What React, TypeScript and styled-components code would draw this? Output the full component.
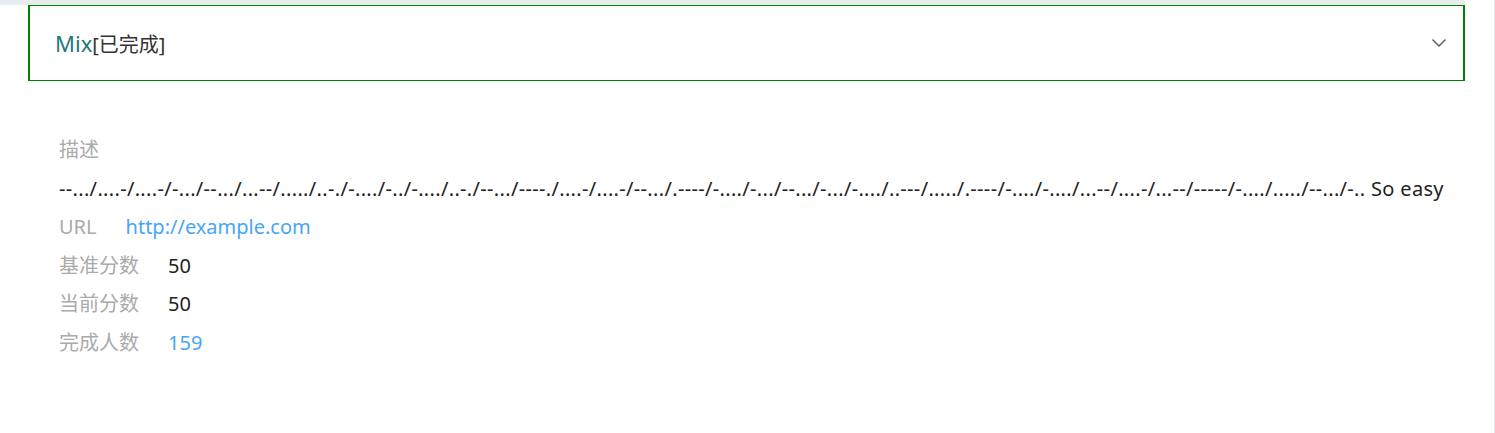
import { createGlobalStyle, styled } from 'styled-components';

const GlobalStyle = createGlobalStyle`
  html, body {
    margin: 0;
    padding: 0;
    background: #fff;
  }
  body {
    font-family: "Noto Sans", "Noto Sans CJK SC", sans-serif;
  }
`;

const Root = styled.div`
  width: 1495px;
  height: 433px;
  box-sizing: border-box;
  border-right: 1px solid #ebebf4;
`;

const Column = styled.div`
  width: 1465px;
  border-top: 5px solid #e9ecef;
  padding-left: 28px;
  box-sizing: border-box;
`;

const Panel = styled.div`
  height: 76px;
  box-sizing: border-box;
  border: 1px solid #008000;
  border-left-width: 2px;
  border-right-width: 2px;

  display: flex;
  align-items: center;
  padding: 0 16px 0 25px;
`;

const Title = styled.span`
  font-size: 22px;
  color: #237a78;
  line-height: 1;
`;

const Status = styled.span`
  font-size: 20px;
  color: #333;
`;

const Chevron = styled.svg`
  margin-left: auto;
  width: 16px;
  height: 10px;
  color: #555;
`;

const Body = styled.div`
  padding: 50px 0 0 31px;
  font-size: 20px;
  line-height: 38.6px;
`;

const Label = styled.span`
  color: #aaa;
  margin-right: 29px;
`;

const Block = styled.div`
  color: #aaa;
`;

const Text = styled.div`
  color: #222;
  white-space: nowrap;
  letter-spacing: 0.33px;
`;

const Row = styled.div`
  display: flex;
`;

const Value = styled.span<{ $link?: boolean }>`
  color: ${(p) => (p.$link ? '#46a6f6' : '#222')};
`;

const morse =
  '--.../....-/....-/-.../--.../...--/...../..-./-..../-../-..../..-./--.../----./....-/....-/--.../.----/-..../-.../--.../-.../-..../..---/...../.----/-..../-..../...--/....-/...--/-----/-..../...../--.../-.. So easy';

export default function App() {
  return (
    <Root>
      <GlobalStyle />
      <Column>
        <Panel>
          <Title>Mix</Title>
          <Status>[已完成]</Status>
          <Chevron viewBox="0 0 16 10" fill="none">
            <polyline points="1.5,1.5 8,8 14.5,1.5" stroke="currentColor" strokeWidth="1.4" />
          </Chevron>
        </Panel>
        <Body>
          <Block>描述</Block>
          <Text>{morse}</Text>
          <Row>
            <Label>URL</Label>
            <Value $link>http://example.com</Value>
          </Row>
          <Row>
            <Label>基准分数</Label>
            <Value>50</Value>
          </Row>
          <Row>
            <Label>当前分数</Label>
            <Value>50</Value>
          </Row>
          <Row>
            <Label>完成人数</Label>
            <Value $link>159</Value>
          </Row>
        </Body>
      </Column>
    </Root>
  );
}
